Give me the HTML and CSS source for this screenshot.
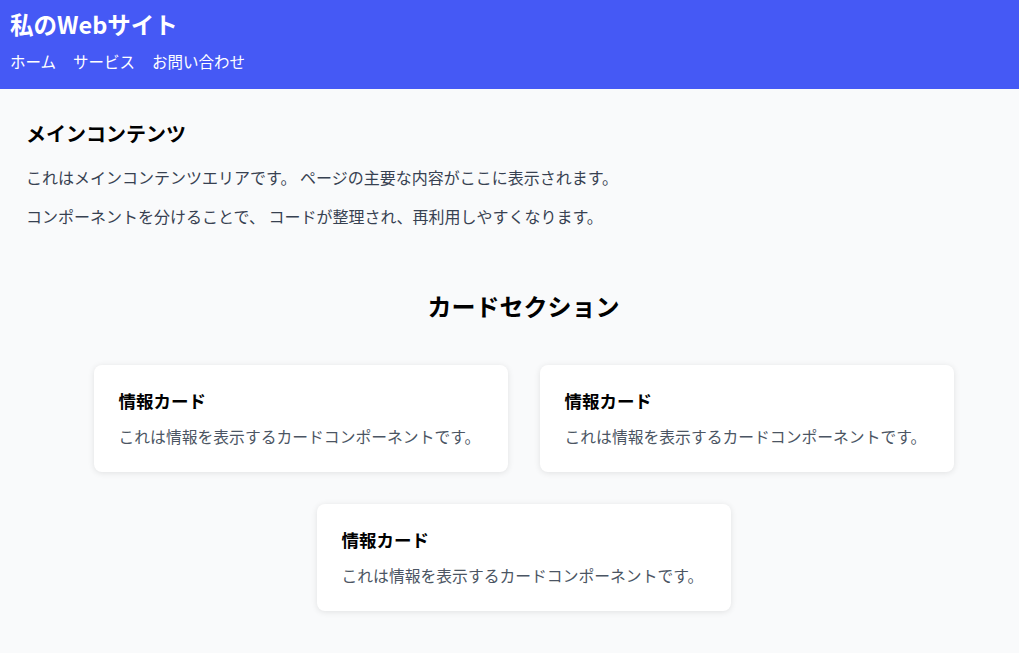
FILE: index.html
```html
<!DOCTYPE html>
<html lang="ja">
<head>
<meta charset="utf-8">
<title>私のWebサイト</title>
<link rel="stylesheet" href="styles.css">
</head>
<body>
<header class="site-header">
  <h1 class="site-title">私のWebサイト</h1>
  <nav class="site-nav">
    <a href="#">ホーム</a>
    <a href="#">サービス</a>
    <a href="#">お問い合わせ</a>
  </nav>
</header>
<main class="main">
  <section class="intro">
    <h2 class="intro-title">メインコンテンツ</h2>
    <p class="intro-text">これはメインコンテンツエリアです。 ページの主要な内容がここに表示されます。</p>
    <p class="intro-text">コンポーネントを分けることで、 コードが整理され、再利用しやすくなります。</p>
  </section>
  <section class="cards-section">
    <h2 class="cards-title">カードセクション</h2>
    <div class="cards">
      <div class="card">
        <h3 class="card-title">情報カード</h3>
        <p class="card-text">これは情報を表示するカードコンポーネントです。</p>
      </div>
      <div class="card">
        <h3 class="card-title">情報カード</h3>
        <p class="card-text">これは情報を表示するカードコンポーネントです。</p>
      </div>
      <div class="card">
        <h3 class="card-title">情報カード</h3>
        <p class="card-text">これは情報を表示するカードコンポーネントです。</p>
      </div>
    </div>
  </section>
</main>
</body>
</html>
```

FILE: styles.css
```css
* { box-sizing: border-box; }
html, body {
  margin: 0;
  padding: 0;
  background: #f9fafb;
  font-family: "Noto Sans CJK JP", "Noto Sans", sans-serif;
  color: #111;
}
.site-header {
  background: #4559f5;
  color: #fff;
  padding: 8px 10px 16px;
  height: 89px;
}
.site-title {
  margin: 0;
  font-size: 23.5px;
  line-height: 32px;
  font-weight: 700;
}
.site-nav {
  margin-top: 9px;
  display: flex;
  gap: 17px;
  font-size: 15.5px;
  line-height: 24px;
}
.site-nav a {
  color: #fff;
  text-decoration: none;
}
.main {
  padding: 30px 26px 40px;
}
.intro-title {
  margin: 0 0 16px;
  font-size: 20px;
  line-height: 30px;
  font-weight: 700;
  color: #000;
}
.intro-text {
  margin: 0 0 15px;
  font-size: 16px;
  line-height: 24px;
  color: #374151;
}
.cards-section {
  padding-left: 28px;
  margin-top: 60px;
}
.cards-title {
  margin: 0 0 41px;
  text-align: center;
  font-size: 24px;
  line-height: 36px;
  font-weight: 700;
  color: #000;
}
.cards {
  display: flex;
  flex-wrap: wrap;
  justify-content: center;
  gap: 32px;
}
.card {
  width: 414px;
  height: 107px;
  background: #fff;
  border-radius: 8px;
  box-shadow: 0 1px 6px rgba(0, 0, 0, 0.1);
  padding: 22px 25px 23px;
}
.card-title {
  margin: 0 0 11px;
  font-size: 17.5px;
  line-height: 27px;
  font-weight: 700;
  color: #000;
}
.card-text {
  margin: 0;
  font-size: 15.8px;
  line-height: 24px;
  white-space: nowrap;
  color: #4b5563;
}
```
